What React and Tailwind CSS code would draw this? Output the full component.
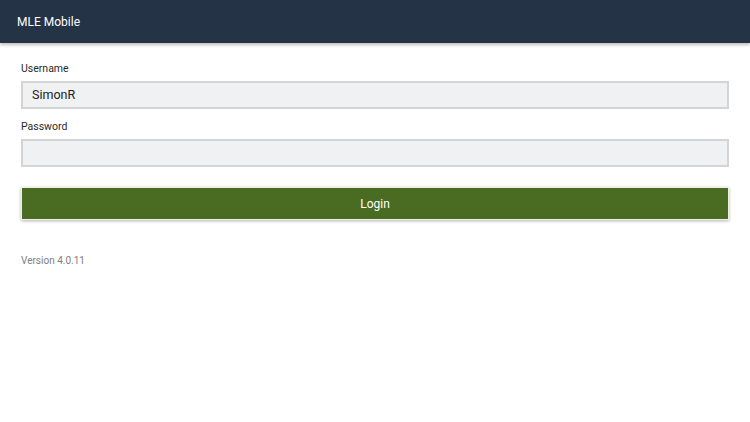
import React from 'react';

const App = () => {
  return (
    <div className="w-[750px] h-[422px] bg-white font-['Roboto',sans-serif] overflow-hidden">
      {/* Header */}
      <div className="h-[43px] bg-[#253347] flex items-center px-[17px] shadow-[0_2px_3px_rgba(0,0,0,0.25)] relative z-10">
        <span className="text-white text-[12px]">MLE Mobile</span>
      </div>

      {/* Form */}
      <div className="px-[21px] pt-[18px]">
        <label className="block text-[10.5px] text-[#2a2a2a] leading-[14px] mb-[5px] pt-[1px]">Username</label>
        <div className="h-[28px] bg-[#f0f1f3] border-2 border-[#d4d4d4] flex items-center pl-[9px] text-[12.5px] text-[#222]">
          SimonR
        </div>

        <label className="block text-[10.5px] text-[#2a2a2a] leading-[14px] mt-[11px] mb-[5px]">Password</label>
        <div className="h-[28px] bg-[#f0f1f3] border-2 border-[#d4d4d4]"></div>

        <button className="mt-[20px] w-full h-[33px] bg-[#4a6b22] text-white text-[12px] border border-[#eef0e4] shadow-[0_1px_3px_rgba(0,0,0,0.3)]">
          Login
        </button>

        <div className="mt-[33px] text-[10px] text-[#808080]">Version 4.0.11</div>
      </div>
    </div>
  );
};

export default App;
